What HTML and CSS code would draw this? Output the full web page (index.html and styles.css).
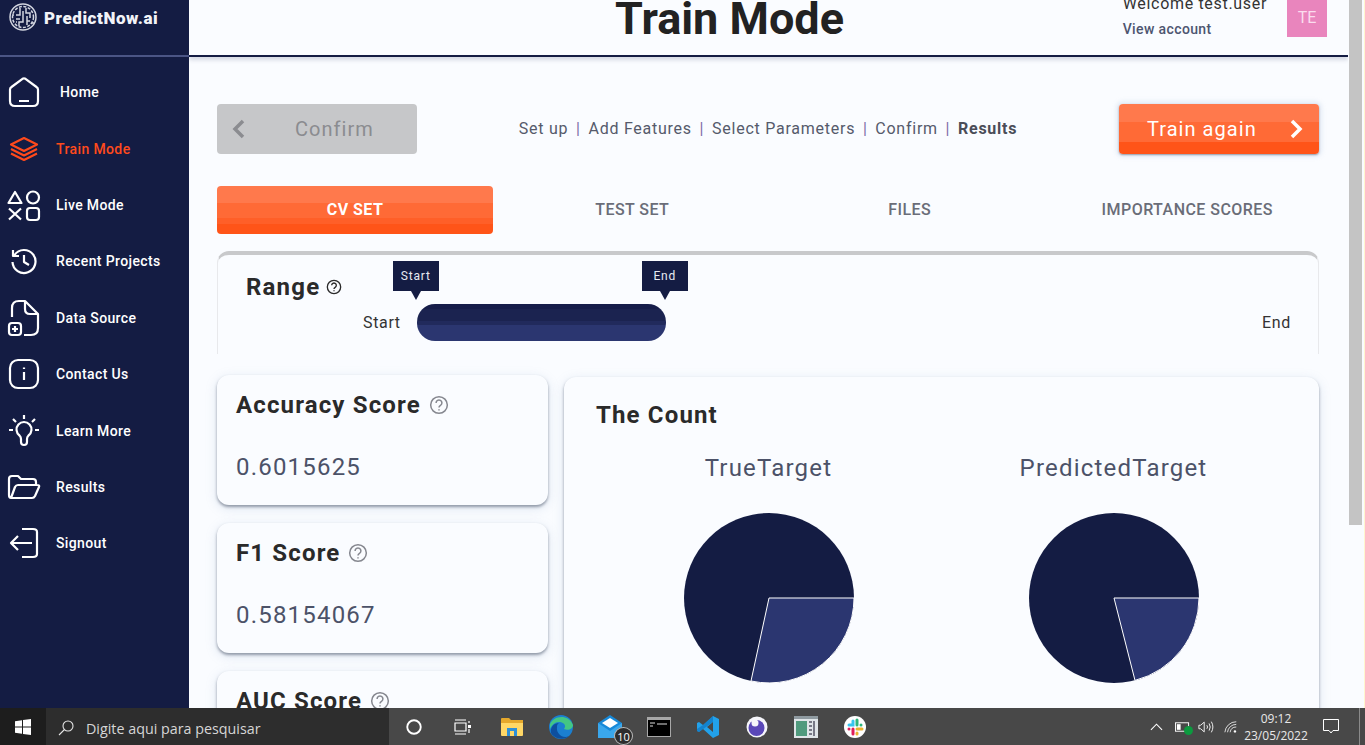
FILE: index.html
```html
<!DOCTYPE html>
<html lang="en">
<head>
    <meta charset="UTF-8">
    <meta name="viewport" content="width=device-width, initial-scale=1.0">
    <title>Train Mode</title>
    <link rel="stylesheet" href="styles.css">
</head>
<body>
    <div class="desktop">
        <nav class="sidebar">
            <div class="logo">
                <svg class="logo-mark" viewBox="0 0 28 28">
                    <circle cx="14" cy="14" r="13"/>
                    <circle cx="14" cy="14" r="10.500" stroke-dasharray="3 1.500"/>
                    <path d="M11 5V12H7M14 8V19H10V23M17 5V10H21V15M7 16H11M18 13V22M21 18H18M7 19H8M5 12H3M23 20H25"/>
                </svg>
                <span>PredictNow.ai</span>
            </div>
            <ul class="nav-list">
                <li class="nav-item">
                    <svg class="nav-icon" viewBox="0 0 32 32"><path d="M2 13.5Q2 12 3.5 11L14.5 2.8Q16 2 17.5 2.8L28.500 11Q30 12 30 13.500V25Q30 30 25 30H7Q2 30 2 25ZM11 25H21"/></svg>
                    <span class="nav-label home-label">Home</span>
                </li>
                <li class="nav-item active">
                    <svg class="nav-icon" viewBox="0 0 32 32"><path d="M16 5L29 11.500L16 18L3 11.500ZM3 16L16 22.500L29 16M3 20.500L16 27L29 20.500"/></svg>
                    <span class="nav-label">Train Mode</span>
                </li>
                <li class="nav-item">
                    <svg class="nav-icon" viewBox="0 0 32 32"><path d="M7 3L13.500 14H.500ZM1 19.500L13 30.500M13 19.500L1 30.500"/><circle cx="25" cy="8.500" r="6"/><rect x="19" y="19" width="12" height="12" rx="3"/></svg>
                    <span class="nav-label">Live Mode</span>
                </li>
                <li class="nav-item">
                    <svg class="nav-icon" viewBox="0 0 32 32"><path d="M6.500 10A11.500 11.500 0 1 1 4.500 17M5 5V11H11M16 10V17L21 20"/></svg>
                    <span class="nav-label">Recent Projects</span>
                </li>
                <li class="nav-item">
                    <svg class="nav-icon" viewBox="0 0 32 32"><path d="M4 15V6Q4 -1 11 -1H17L30 12V26Q30 33 23 33H16M17 -1V7Q17 12 22 12H30"/><rect x="1" y="21" width="12" height="12" rx="3"/><path d="M7 24V30M4 27H10"/></svg>
                    <span class="nav-label">Data Source</span>
                </li>
                <li class="nav-item">
                    <svg class="nav-icon" viewBox="0 0 32 32"><rect x="2" y="2" width="28" height="28" rx="8"/><path d="M16 14V22M16 9.500V11"/></svg>
                    <span class="nav-label">Contact Us</span>
                </li>
                <li class="nav-item">
                    <svg class="nav-icon" viewBox="0 0 32 32"><path d="M16 0V4M5 4L8 7M27 4L24 7M1 15H5M27 15H31M13 27V24Q13 22 11.500 20.500A7.500 7.500 0 1 1 20.500 20.500Q19 22 19 24V27Q19 30 16 30Q13 30 13 27Z"/></svg>
                    <span class="nav-label">Learn More</span>
                </li>
                <li class="nav-item">
                    <svg class="nav-icon" viewBox="0 0 32 32"><path d="M3 27Q1 27 1 24V8Q1 5 4 5H10L13 8H25Q28 8 28 11V14M3 27L7 16Q8 14 10 14H29Q32 14 31 16L27 25Q26 27 24 27Z"/></svg>
                    <span class="nav-label">Results</span>
                </li>
                <li class="nav-item">
                    <svg class="nav-icon" viewBox="0 0 32 32"><path d="M14 2H25Q29 2 29 5V27Q29 30 25 30H14M3 16H24M10 9L3 16L10 23"/></svg>
                    <span class="nav-label">Signout</span>
                </li>
            </ul>
        </nav>

        <main class="main">
            <header class="topbar">
                <h1>Train Mode</h1>
                <div class="account">
                    <div class="account-text">
                        <div class="welcome">Welcome test.user</div>
                        <div class="view-account">View account</div>
                    </div>
                    <div class="avatar">TE</div>
                </div>
            </header>

            <div class="content">
                <div class="steps-row">
                    <button class="btn btn-back">
                        <svg class="chevron" viewBox="0 0 14 20"><path d="M11 2L3 10L11 18"/></svg>
                        <span>Confirm</span>
                    </button>
                    <div class="steps">
                        <span>Set up</span><i>|</i>
                        <span>Add Features</span><i>|</i>
                        <span>Select Parameters</span><i>|</i>
                        <span>Confirm</span><i>|</i>
                        <b>Results</b>
                    </div>
                    <button class="btn btn-next">
                        <span>Train again</span>
                        <svg class="chevron" viewBox="0 0 14 20"><path d="M3 2L11 10L3 18"/></svg>
                    </button>
                </div>

                <div class="tabs">
                    <div class="tab active">CV SET</div>
                    <div class="tab">TEST SET</div>
                    <div class="tab">FILES</div>
                    <div class="tab">IMPORTANCE SCORES</div>
                </div>

                <section class="range-card">
                    <h2 class="range-title">Range
                        <svg class="help help-dark" viewBox="0 0 24 24"><circle cx="12" cy="12" r="10"/><path d="M8.500 9.500A3.500 3.500 0 1 1 13.800 12.500C12.700 13.200 12 13.800 12 15M12 17V18.500"/></svg>
                    </h2>
                    <div class="slider-row">
                        <span class="slider-label">Start</span>
                        <div class="track">
                            <div class="thumb-range">
                                <div class="tip tip-start">Start</div>
                                <div class="tip tip-end">End</div>
                            </div>
                        </div>
                        <span class="slider-label">End</span>
                    </div>
                </section>

                <div class="results-grid">
                    <div class="scores">
                        <section class="score-card">
                            <h3>Accuracy Score
                                <svg class="help" viewBox="0 0 24 24"><circle cx="12" cy="12" r="10"/><path d="M8.500 9.500A3.500 3.500 0 1 1 13.800 12.500C12.700 13.200 12 13.800 12 15M12 17V18.500"/></svg>
                            </h3>
                            <p>0.6015625</p>
                        </section>
                        <section class="score-card">
                            <h3>F1 Score
                                <svg class="help" viewBox="0 0 24 24"><circle cx="12" cy="12" r="10"/><path d="M8.500 9.500A3.500 3.500 0 1 1 13.800 12.500C12.700 13.200 12 13.800 12 15M12 17V18.500"/></svg>
                            </h3>
                            <p>0.58154067</p>
                        </section>
                        <section class="score-card">
                            <h3>AUC Score
                                <svg class="help" viewBox="0 0 24 24"><circle cx="12" cy="12" r="10"/><path d="M8.500 9.500A3.500 3.500 0 1 1 13.800 12.500C12.700 13.200 12 13.800 12 15M12 17V18.500"/></svg>
                            </h3>
                            <p>0.60</p>
                        </section>
                    </div>
                    <section class="count-card">
                        <h3>The Count</h3>
                        <div class="charts">
                            <div class="chart">
                                <div class="chart-title">TrueTarget</div>
                                <svg class="pie" viewBox="0 0 170 170">
                                    <circle class="slice-dark" cx="85" cy="85" r="85"/>
                                    <path class="slice-light" d="M85 85H170A85 85 0 0 1 67 168Z"/>
                                </svg>
                            </div>
                            <div class="chart">
                                <div class="chart-title">PredictedTarget</div>
                                <svg class="pie" viewBox="0 0 170 170">
                                    <circle class="slice-dark" cx="85" cy="85" r="85"/>
                                    <path class="slice-light" d="M85 85H170A85 85 0 0 1 106 167.400Z"/>
                                </svg>
                            </div>
                        </div>
                    </section>
                </div>
            </div>
        </main>

        <div class="scrollbar"><div class="scroll-thumb"></div></div>
    </div>

    <footer class="taskbar">
        <div class="start">
            <svg class="win-logo" viewBox="0 0 16 16"><path d="M0 2.300L7 1.300V7.500H0ZM8 1.100L16 0V7.500H8ZM0 8.500H7V14.700L0 13.700ZM8 8.500H16V16L8 14.900Z"/></svg>
        </div>
        <div class="search">
            <svg class="search-icon" viewBox="0 0 16 16"><circle cx="10" cy="6" r="5"/><path d="M6.500 9.500L1 15"/></svg>
            <span>Digite aqui para pesquisar</span>
        </div>
        <div class="task-icons">
            <div class="task-icon"><svg viewBox="0 0 24 24" width="18" height="18"><circle cx="12" cy="12" r="9" fill="none" stroke="#fff" stroke-width="2.500"/></svg></div>
            <div class="task-icon"><svg viewBox="0 0 18 16" width="18" height="16" fill="none" stroke="#fff" stroke-width="1.200"><path d="M1 1H12M1 15H12M1 4H12V12H1ZM15 2V4M15 10V14"/><rect x="14" y="6" width="3" height="3" fill="#fff" stroke="none"/></svg></div>
            <div class="task-icon"><svg viewBox="0 0 24 20" width="24" height="20"><path d="M1 2Q1 1 2 1H9L11 3H23V6H1Z" fill="#e5a82c"/><path d="M1 6H23V18Q23 19 22 19H2Q1 19 1 18Z" fill="#ffd766"/><path d="M7 11H17V19H14V14H10V19H7Z" fill="#2f8fd6"/></svg></div>
            <div class="task-icon"><svg viewBox="0 0 26 26" width="26" height="26"><circle cx="13" cy="13" r="12" fill="#1b7fd0"/><path d="M2 10C5 2 20 -1 25 11C25 15 20 17 16 15C20 10 12 6 7 9C4 11 3 13 2 15Z" fill="#43c685"/><path d="M9 13C8 20 15 25 21 22C17 26 7 26 3 19C2 13 6 9 11 9C9 10 9 12 9 13Z" fill="#0e4f9e"/></svg></div>
            <div class="task-icon task-mail">
                <svg viewBox="0 0 26 24" width="26" height="24"><path d="M1 8L13 0L25 8V23H1Z" fill="#1789d8"/><path d="M5 8L13 3L21 8L13 13Z" fill="#fff"/><path d="M1 8L13 16L25 8V23H1Z" fill="#3aa7ec"/></svg>
                <span class="badge">10</span>
            </div>
            <div class="task-icon"><svg viewBox="0 0 24 20" width="24" height="20"><rect width="24" height="20" fill="#a8a8a8"/><rect x="1" y="3" width="22" height="16" fill="#000"/><path d="M3 6H8M10 7H20M3 9H6" stroke="#ddd" stroke-width="1"/></svg></div>
            <div class="task-icon"><svg viewBox="0 0 24 24" width="24" height="24"><path d="M17 1L23 4V20L17 23L7 14L3 17L1 16V8L3 7L7 10ZM17 7L11 12L17 17Z" fill="#22a1ea"/><path d="M17 1V7L3 17L1 16V14L7 10Z" fill="#0a70bd" opacity=".6"/></svg></div>
            <div class="task-icon"><svg viewBox="0 0 22 22" width="22" height="22"><circle cx="11" cy="11" r="10.500" fill="#f5f5fa"/><circle cx="10.500" cy="12" r="8" fill="#5a47b8"/><circle cx="9" cy="7" r="3.500" fill="#f5f5fa"/></svg></div>
            <div class="task-icon"><svg viewBox="0 0 24 22" width="24" height="22"><rect width="24" height="22" fill="#dfe5e8"/><rect y="0" width="24" height="3" fill="#8f9aa0"/><rect x="2" y="5" width="11" height="15" fill="#4f9a7d"/><path d="M15 6H18M15 10H18M15 14H18M15 18H18M20 5V20" stroke="#556" stroke-width="1.500"/></svg></div>
            <div class="task-icon"><svg viewBox="0 0 22 22" width="22" height="22"><circle cx="11" cy="11" r="11" fill="#fff"/><g stroke-width="3" stroke-linecap="round" fill="none"><path d="M9 5V9H5" stroke="#36c5f0"/><path d="M13 4V9" stroke="#2eb67d"/><path d="M17 9H17" stroke="#2eb67d"/><path d="M13 13H18" stroke="#ecb22e"/><path d="M13 18V17" stroke="#ecb22e"/><path d="M9 13V18" stroke="#e01e5a"/><path d="M5 13H5" stroke="#e01e5a"/></g></svg></div>
        </div>
        <div class="tray">
            <svg class="tray-up" viewBox="0 0 14 8" width="13" height="8" fill="none" stroke="#fff" stroke-width="1.200"><path d="M1 7L7 1L13 7"/></svg>
            <div class="tray-battery">
                <svg viewBox="0 0 16 10" width="15" height="10" fill="none" stroke="#fff"><rect x=".500" y=".500" width="14" height="9"/><rect x="2" y="2" width="4" height="6" fill="#fff" stroke="none"/></svg>
                <span class="leaf"></span>
            </div>
            <svg class="tray-sound" viewBox="0 0 18 14" width="16" height="14" fill="none" stroke="#fff"><path d="M1 5H3L7 1.500V12.500L3 9H1ZM10 5Q11.500 7 10 9M12.500 3Q15 7 12.500 11M15 1Q18.500 7 15 13"/></svg>
            <svg viewBox="0 0 16 14" width="14" height="14" fill="none" stroke="#fff"><path d="M1 13A13 13 0 0 1 14 1M4 13A10 10 0 0 1 14 4M7 13A7 7 0 0 1 14 7" stroke-width=".900"/><circle cx="12.500" cy="12" r="1.400" fill="#fff" stroke="none"/></svg>
            <div class="clock">
                <div>09:12</div>
                <div>23/05/2022</div>
            </div>
            <svg class="notify" viewBox="0 0 16 15" width="16" height="15" fill="none" stroke="#fff"><path d="M.500 .500H15.500V11.500H10L8 14L6 11.500H.500Z"/></svg>
            <div class="show-desktop"></div>
        </div>
    </footer>
</body>
</html>
```

FILE: styles.css
```css
* {
    box-sizing: border-box;
}

body {
    margin: 0;
    height: 745px;
    overflow: hidden;
    font-family: Roboto, Arial, sans-serif;
    background-color: #fafcff;
    display: flex;
    flex-direction: column;
}

.desktop {
    display: flex;
    height: 708px;
    overflow: hidden;
}

/* sidebar */
.sidebar {
    width: 189px;
    flex-shrink: 0;
    background-color: #141c43;
    color: #fff;
}

.logo {
    height: 57px;
    border-bottom: 2px solid #4b5585;
    padding: 3px 0 0 9px;
    display: flex;
    align-items: flex-start;
    gap: 7px;
    font-size: 17px;
    font-weight: 900;
    letter-spacing: 0.55px;
    color: #f2f3f8;
}

.logo span {
    line-height: 30px;
}

.logo-mark {
    width: 28px;
    height: 28px;
    fill: none;
    stroke: #d2d5df;
    stroke-width: 1.500;
}

.nav-list {
    list-style: none;
    margin: 7px 0 0;
    padding: 0;
}

.nav-item {
    height: 56.400px;
    padding-left: 8px;
    display: flex;
    align-items: center;
    gap: 16px;
    font-size: 14px;
    font-weight: 500;
    letter-spacing: 0.38px;
}

.nav-item.active {
    color: #ff4a1c;
}

.nav-icon {
    width: 32px;
    height: 32px;
    flex-shrink: 0;
    overflow: visible;
    fill: none;
    stroke: currentColor;
    stroke-width: 2.200;
    stroke-linejoin: round;
}

.home-label {
    margin-left: 4px;
}

/* header */
.main {
    width: 1159px;
    flex-shrink: 0;
    overflow: hidden;
}

.topbar {
    height: 57px;
    border-bottom: 2px solid #141c43;
    box-shadow: 0 3px 4px rgba(70, 80, 120, 0.2);
    padding-left: 426px;
    padding-right: 21px;
    display: flex;
    justify-content: space-between;
    align-items: flex-start;
    position: relative;
    overflow: hidden;
    background-color: #fafcff;
}

h1 {
    margin: -3px 0 0;
    font-size: 45px;
    line-height: 44px;
    font-weight: 700;
    color: #222;
}

.account {
    display: flex;
    gap: 20px;
}

.welcome {
    margin-top: -6px;
    font-size: 16px;
    line-height: 20px;
    letter-spacing: 0.68px;
    color: #333;
}

.view-account {
    margin-top: 6px;
    font-size: 14px;
    line-height: 18px;
    font-weight: 500;
    letter-spacing: 0.38px;
    color: #4d5570;
}

.avatar {
    width: 40px;
    height: 37px;
    padding-bottom: 3px;
    background-color: #e985bd;
    color: #fbdcee;
    font-size: 16px;
    display: flex;
    align-items: center;
    justify-content: center;
}

/* steps */
.content {
    padding: 47px 29px 0 28px;
}

.steps-row {
    display: flex;
    justify-content: space-between;
    align-items: center;
}

.btn {
    width: 200px;
    height: 50px;
    border: none;
    border-radius: 4px;
    font-family: inherit;
    font-size: 20px;
    letter-spacing: 1.050px;
    display: flex;
    align-items: center;
}

.chevron {
    width: 14px;
    height: 20px;
    fill: none;
    stroke: currentColor;
    stroke-width: 3.500;
}

.btn-back {
    background-color: #c6c7c9;
    color: #8b8c90;
    padding: 0 0 0 15px;
}

.btn-back span {
    margin-left: 49px;
}

.btn-next {
    color: #fff;
    padding: 0 16px 0 28px;
    justify-content: space-between;
    background: linear-gradient(#ff794c 0 18px, #ff6a36 18px 38px, #ff5418 38px);
    box-shadow: 0 1px 2px rgba(60, 70, 90, 0.5), 0 0 4px 3px rgba(170, 190, 220, 0.25);
}

.steps {
    padding-bottom: 2px;
    display: flex;
    gap: 7.750px;
    font-size: 16px;
    letter-spacing: 0.75px;
    color: #555a6b;
}

.steps i {
    font-style: normal;
    color: #7d6ea8;
}

.steps b {
    font-weight: 700;
    color: #4a4d58;
}

/* tabs */
.tabs {
    margin-top: 32px;
    display: grid;
    grid-template-columns: 276.500px repeat(3, 277.500px);
}

.tab {
    height: 48px;
    padding-bottom: 2px;
    display: flex;
    align-items: center;
    justify-content: center;
    font-size: 16px;
    font-weight: 500;
    letter-spacing: 0.45px;
    color: #6a6d78;
}

.tab.active {
    width: 276px;
    border-radius: 4px;
    color: #fff;
    font-weight: 700;
    background: linear-gradient(#ff794c 0 17px, #ff6a36 17px 32px, #ff5f28 32px 38px, #ff5418 38px);
}

/* range */
.range-card {
    margin-top: 17px;
    height: 103px;
    padding: 18px 28px 0;
    border-top: 4px solid #c8c9cb;
    border-left: 1px solid #e8e9ec;
    border-right: 1px solid #e8e9ec;
    border-radius: 12px 12px 0 0;
}

.range-title {
    margin: 0;
    font-size: 24px;
    line-height: 28px;
    font-weight: 700;
    letter-spacing: 1.200px;
    color: #2a2a2a;
    display: flex;
    align-items: center;
    gap: 6px;
}

.help {
    width: 20px;
    height: 20px;
    fill: none;
    stroke: #85878f;
    stroke-width: 1.800;
}

.help-dark {
    width: 16px;
    height: 16px;
    stroke: #2a2a2a;
    stroke-width: 2;
}

.slider-row {
    margin-top: 3px;
    margin-right: -1px;
    padding-left: 117px;
    display: flex;
    align-items: center;
    gap: 16px;
}

.slider-label {
    font-size: 16px;
    letter-spacing: 0.65px;
    color: #333;
}

.track {
    flex: 1;
}

.thumb-range {
    width: 249px;
    height: 37px;
    border-radius: 18px;
    position: relative;
    background: linear-gradient(#161d4a 0 5px, #1b2350 5px 17px, #212a5c 17px 21px, #2b3670 21px);
}

.tip {
    position: absolute;
    top: -43px;
    width: 46px;
    height: 30px;
    background-color: #141c43;
    color: #e8eaf2;
    font-size: 12px;
    letter-spacing: 0.8px;
    display: flex;
    align-items: center;
    justify-content: center;
}

.tip::after {
    content: "";
    position: absolute;
    left: 18px;
    top: 30px;
    border-left: 5px solid transparent;
    border-right: 5px solid transparent;
    border-top: 9px solid #141c43;
}

.tip-start {
    left: -24px;
}

.tip-end {
    right: -22px;
}

/* results */
.results-grid {
    margin-top: 21px;
    display: grid;
    grid-template-columns: 331px 755px;
    gap: 16px;
    align-items: start;
}

.scores {
    display: flex;
    flex-direction: column;
    gap: 18px;
}

.score-card,
.count-card {
    border-radius: 12px;
    background-color: #fafcff;
    box-shadow: 0 2px 3px rgba(60, 70, 90, 0.5), 0 3px 12px rgba(120, 150, 190, 0.22);
}

.score-card {
    height: 130px;
    padding: 16px 19px 0;
}

h3 {
    margin: 0;
    font-size: 24px;
    line-height: 28px;
    font-weight: 700;
    letter-spacing: 1.150px;
    color: #2a2a2a;
    display: flex;
    align-items: center;
    gap: 8px;
}

.score-card p {
    margin: 34px 0 0;
    font-size: 24px;
    line-height: 28px;
    letter-spacing: 1.200px;
    color: #4c5268;
}

.count-card {
    margin-top: 2px;
    height: 400px;
    padding: 24px 32px 0;
}

.charts {
    margin-top: 25px;
    display: grid;
    grid-template-columns: 345px 345px;
}

.chart {
    display: flex;
    flex-direction: column;
    align-items: center;
    gap: 31px;
}

.chart-title {
    font-size: 24px;
    line-height: 28px;
    letter-spacing: 1.200px;
    color: #4c5268;
}

.pie {
    width: 170px;
    height: 170px;
}

.slice-dark {
    fill: #141c43;
}

.slice-light {
    fill: #2b3670;
    stroke: #fff;
    stroke-width: 1;
}

/* scrollbar */
.scrollbar {
    margin-left: 1px;
    flex: 1;
    border-right: 1px solid #fff7cf;
}

.scroll-thumb {
    width: 13px;
    height: 525px;
    background-color: #c4c4c4;
}

/* windows taskbar */
.taskbar {
    height: 37px;
    flex-shrink: 0;
    display: flex;
    align-items: center;
    background-color: #484848;
    color: #fff;
    font-family: "Open Sans", "Noto Sans", sans-serif;
}

.start {
    width: 46px;
    height: 100%;
    background-color: #1d1d1d;
    display: flex;
    align-items: center;
    justify-content: center;
}

.win-logo {
    width: 16px;
    height: 16px;
    fill: #fff;
}

.search {
    width: 343px;
    height: 100%;
    padding: 3px 0 0 12px;
    background-color: #2d2d2d;
    display: flex;
    align-items: center;
    gap: 12px;
    font-size: 14.300px;
    color: #d6d6d6;
}

.search-icon {
    width: 16px;
    height: 16px;
    fill: none;
    stroke: #e4e4e4;
    stroke-width: 1.100;
}

.task-icons {
    display: flex;
}

.task-icon {
    width: 49px;
    height: 37px;
    display: flex;
    align-items: center;
    justify-content: center;
    position: relative;
}

.badge {
    position: absolute;
    left: 29px;
    top: 19px;
    width: 19px;
    height: 18px;
    border-radius: 50%;
    border: 1px solid #bbb;
    background-color: #2d2d2d;
    font-size: 11px;
    display: flex;
    align-items: center;
    justify-content: center;
}

.tray {
    margin-left: auto;
    height: 100%;
    padding-right: 5px;
    display: flex;
    align-items: center;
    gap: 10px;
}

.tray-up {
    margin-right: 2px;
}

.tray-battery {
    position: relative;
    display: flex;
}

.tray-sound {
    margin-left: -2px;
}

.leaf {
    position: absolute;
    left: 9px;
    top: 4px;
    width: 9px;
    height: 9px;
    border-radius: 50%;
    background-color: #0c9a3f;
}

.clock {
    margin-left: -5px;
    width: 66px;
    font-size: 12px;
    line-height: 17px;
    text-align: center;
    color: #e8e8e8;
}

.notify {
    margin-left: 4px;
}

.show-desktop {
    margin-left: 10px;
    width: 1px;
    height: 100%;
    background-color: #8a8a8a;
}
```
